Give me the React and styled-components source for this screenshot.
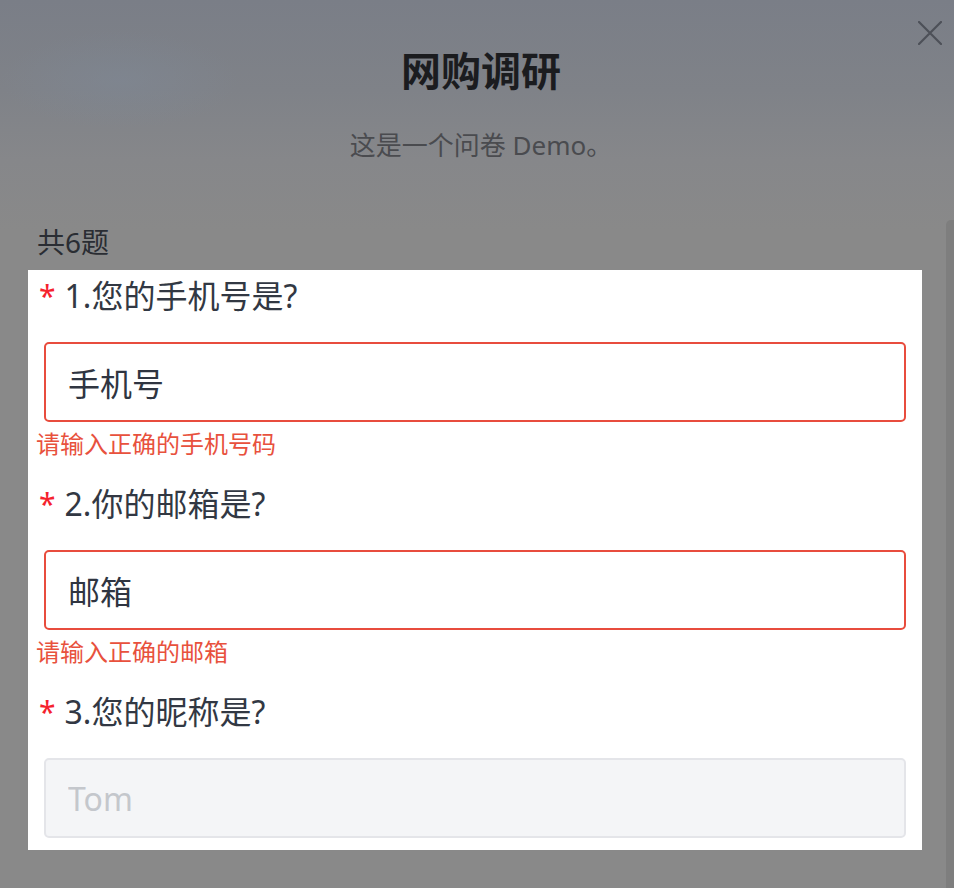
import React from "react";
import styled, { createGlobalStyle } from "styled-components";

const GlobalStyle = createGlobalStyle`
  html, body {
    margin: 0;
    padding: 0;
  }
  body {
    font-family: "Noto Sans", "Noto Sans CJK SC", sans-serif;
  }
  * {
    box-sizing: border-box;
  }
`;

const Root = styled.div`
  position: relative;
  min-height: 100vh;
  overflow: hidden;
  background:
    radial-gradient(ellipse 170px 70px at 120px 80px, rgba(126, 136, 150, 0.5), transparent 70%),
    linear-gradient(180deg, #7a7e87 0%, #7f8288 90px, #86878a 160px, #898989 230px, #898989 100%);
  padding: 44px 32px 0 28px;
`;

const CloseButton = styled.button`
  position: absolute;
  top: 18px;
  right: 9px;
  width: 30px;
  height: 30px;
  padding: 0;
  border: 0;
  background: none;
  display: flex;
  align-items: center;
  justify-content: center;
  cursor: pointer;
`;

const ScrollThumb = styled.div`
  position: absolute;
  top: 220px;
  right: 0;
  bottom: 0;
  width: 8px;
  border-radius: 5px 0 0 0;
  background: #7e7e7e;
`;

const Header = styled.header`
  display: flex;
  flex-direction: column;
  align-items: center;
  padding-left: 12px;
`;

const Title = styled.h1`
  margin: 0;
  font-size: 40px;
  line-height: 54px;
  font-weight: 700;
  color: #1b1c1f;
`;

const Subtitle = styled.p`
  margin: 29px 0 0;
  font-size: 26px;
  line-height: 36px;
  color: #4a4b4f;
`;

const Count = styled.div`
  margin-top: 61px;
  padding-left: 9px;
  font-size: 28px;
  line-height: 36px;
  color: #2a2d33;
`;

const Panel = styled.section`
  margin-top: 10px;
  background: #ffffff;
  padding: 4px 0 12px;
  display: flex;
  flex-direction: column;
`;

const Question = styled.div`
  display: flex;
  flex-direction: column;
  & + & {
    margin-top: 16px;
  }
`;

const Label = styled.div`
  display: flex;
  align-items: center;
  gap: 9px;
  padding-left: 11px;
  font-size: 32px;
  line-height: 44px;
  color: #323843;
`;

const Star = styled.span`
  font-size: 30px;
  color: #f5222d;
`;

const Field = styled.input`
  display: block;
  margin: 24px 16px 0;
  width: calc(100% - 32px);
  height: 80px;
  padding: 0 22px;
  border: 2px solid ${(p) => (p.$error ? "#e84c3d" : "#e4e5e9")};
  border-radius: 5px;
  background: ${(p) => (p.disabled ? "#f4f5f7" : "#ffffff")};
  font-family: "Noto Sans", "Noto Sans CJK SC", sans-serif;
  font-size: 32px;
  color: #2f3541;
  outline: none;
  &::placeholder {
    color: #c4c7cc;
  }
`;

const ErrorText = styled.div`
  padding-left: 8px;
  font-size: 24px;
  line-height: 44px;
  color: #e8513d;
`;

const questions = [
  { no: 1, text: "您的手机号是?", value: "手机号", error: "请输入正确的手机号码" },
  { no: 2, text: "你的邮箱是?", value: "邮箱", error: "请输入正确的邮箱" },
  { no: 3, text: "您的昵称是?", placeholder: "Tom", disabled: true },
];

export default function App() {
  return (
    <Root>
      <GlobalStyle />
      <CloseButton aria-label="关闭">
        <svg width="24" height="24" viewBox="0 0 24 24">
          <path d="M1 1 L23 23 M23 1 L1 23" stroke="#4d5058" strokeWidth="2.2" strokeLinecap="round" />
        </svg>
      </CloseButton>
      <ScrollThumb />
      <Header>
        <Title>网购调研</Title>
        <Subtitle>这是一个问卷 Demo。</Subtitle>
      </Header>
      <Count>共6题</Count>
      <Panel>
        {questions.map((q) => (
          <Question key={q.no}>
            <Label>
              <Star>*</Star>
              <span>
                {q.no}.{q.text}
              </span>
            </Label>
            <Field
              readOnly
              defaultValue={q.value}
              placeholder={q.placeholder}
              disabled={q.disabled}
              $error={!!q.error}
            />
            {q.error && <ErrorText>{q.error}</ErrorText>}
          </Question>
        ))}
      </Panel>
    </Root>
  );
}
